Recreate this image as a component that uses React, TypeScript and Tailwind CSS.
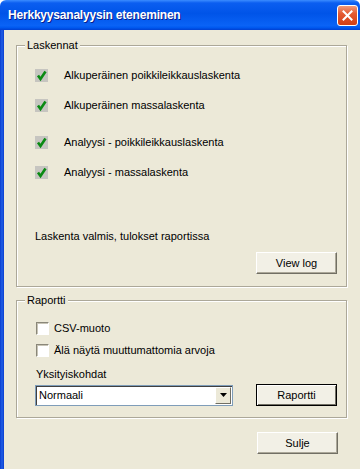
const steps = [
  { label: 'Alkuperäinen poikkileikkauslaskenta', gap: false },
  { label: 'Alkuperäinen massalaskenta', gap: false },
  { label: 'Analyysi - poikkileikkauslaskenta', gap: true },
  { label: 'Analyysi - massalaskenta', gap: false },
];

function DoneIcon() {
  return (
    <svg width="13" height="13" viewBox="0 0 13 13">
      <rect x="0" y="0" width="13" height="13" fill="#c6c5c0" />
      <path d="M3 6.5 L5.5 10 L10.5 2.5" stroke="#0a8a12" strokeWidth="2.6" fill="none" strokeLinejoin="miter" />
    </svg>
  );
}

function Button({ label, isDefault = false }: { label: string; isDefault?: boolean }) {
  return (
    <button
      className={
        'w-[81px] h-[22px] flex items-center justify-center bg-[#f2f0e6] text-[11px] text-black ' +
        (isDefault
          ? 'border border-black shadow-[inset_1px_1px_0_#fff,inset_-1px_-1px_0_#716f64]'
          : 'border border-t-white border-l-white border-b-[#716f64] border-r-[#716f64] shadow-[inset_-1px_-1px_0_#aca899]')
      }
    >
      {label}
    </button>
  );
}

function Checkbox({ label }: { label: string }) {
  return (
    <div className="flex items-center h-[16px]">
      <div className="w-[13px] h-[13px] bg-white border border-t-[#8a8779] border-l-[#8a8779] border-b-white border-r-white shadow-[inset_1px_1px_0_#c7c4b6]" />
      <span className="ml-[5px] text-[11px]">{label}</span>
    </div>
  );
}

function Group({ title, children }: { title: string; children: React.ReactNode }) {
  return (
    <div className="relative border border-[#aca899] shadow-[inset_1px_1px_0_#fff,1px_1px_0_#fff]">
      <span className="absolute left-[8px] -top-[8px] px-[2px] bg-[#ece9d8] text-[11px] leading-[14px]">{title}</span>
      {children}
    </div>
  );
}

export default function App() {
  return (
    <div className="w-[360px] h-[469px] overflow-hidden flex flex-col font-['Liberation_Sans',Arial,sans-serif] text-black select-none">
      {/* title bar */}
      <div className="h-[30px] shrink-0 flex items-center justify-between pl-[8px] pr-[2px] rounded-t-[6px] bg-[linear-gradient(180deg,#3b8cff_0%,#0b5ef0_10%,#0054e8_45%,#0a63f6_85%,#0059f0_92%,#0040d2_100%)]">
        <span className="text-white font-bold text-[12px] tracking-[-0.2px] [text-shadow:1px_1px_0_#0a1d8a]">
          Herkkyysanalyysin eteneminen
        </span>
        <div className="w-[21px] h-[21px] rounded-[3px] border border-white bg-[linear-gradient(180deg,#f09a7a_0%,#e45a32_40%,#d23e14_100%)] flex items-center justify-center">
          <svg width="11" height="11" viewBox="0 0 11 11">
            <path d="M1.5 1.5 L9.5 9.5 M9.5 1.5 L1.5 9.5" stroke="#fff" strokeWidth="2" strokeLinecap="square" />
          </svg>
        </div>
      </div>

      <div className="flex flex-1">
        <div className="w-[4px] bg-[linear-gradient(90deg,#0a3ccf,#1f5fe6,#0a3ccf)]" />
        <div className="flex-1 bg-[#ece9d8] flex flex-col pl-[12px] pr-[13px] pt-[15px]">
          <Group title="Laskennat">
            <div className="flex flex-col pt-[14px] pl-[18px]">
              {steps.map((s) => (
                <div key={s.label} className={'flex items-center h-[30px] ' + (s.gap ? 'mt-[7px]' : '')}>
                  <DoneIcon />
                  <span className="ml-[16px] text-[11px]">{s.label}</span>
                </div>
              ))}
              <div className="mt-[42px] h-[14px] flex items-center text-[11px]">Laskenta valmis, tulokset raportissa</div>
            </div>
            <div className="flex justify-end pr-[9px] mt-[9px] pb-[12px]">
              <Button label="View log" />
            </div>
          </Group>

          <div className="mt-[13px]">
            <Group title="Raportti">
              <div className="flex flex-col pt-[19px] pl-[19px] pr-[9px] pb-[11px]">
                <Checkbox label="CSV-muoto" />
                <div className="mt-[6px]">
                  <Checkbox label="Älä näytä muuttumattomia arvoja" />
                </div>
                <div className="mt-[9px] h-[14px] flex items-center text-[11px]">Yksityiskohdat</div>
                <div className="mt-[3px] flex items-center justify-between -ml-[1px]">
                  <div className="w-[198px] h-[21px] bg-white border border-t-[#7f9db9] border-l-[#7f9db9] border-b-[#7f9db9] border-r-[#7f9db9] shadow-[inset_1px_1px_0_#404040] flex items-center">
                    <span className="flex-1 pl-[3px] text-[11px]">Normaali</span>
                    <div className="w-[16px] h-[17px] mr-[1px] bg-[#ece9d8] border border-t-white border-l-white border-b-[#716f64] border-r-[#716f64] flex items-center justify-center">
                      <svg width="7" height="4" viewBox="0 0 7 4">
                        <path d="M0 0 H7 L3.5 4 Z" fill="#000" />
                      </svg>
                    </div>
                  </div>
                  <Button label="Raportti" isDefault />
                </div>
              </div>
            </Group>
          </div>

          <div className="flex justify-end pr-[9px] mt-[14px]">
            <Button label="Sulje" />
          </div>
        </div>
      </div>
    </div>
  );
}
